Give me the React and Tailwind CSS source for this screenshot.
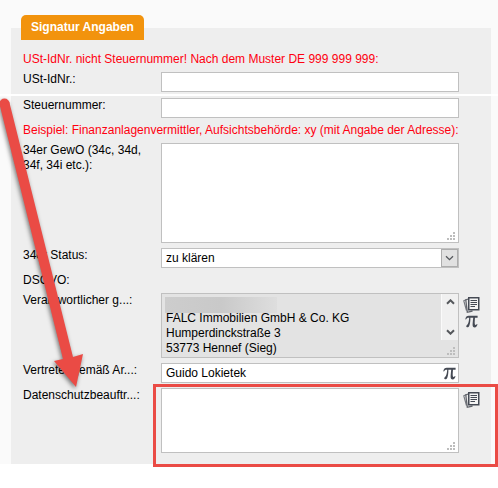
import { useState } from 'react';

const PapersIcon = () => (
  <svg width="17" height="17" viewBox="0 0 17 17" fill="none">
    <path d="M3.5 2.5 L0.8 3.8 L3.5 13.5" stroke="#777a80" strokeWidth="1.2" />
    <path
      d="M5 2 L2.8 3 L4.3 15.3 L9.5 14"
      stroke="#62656c"
      strokeWidth="1.3"
    />
    <rect
      x="5.75"
      y="0.75"
      width="10"
      height="12"
      fill="#f4f4f4"
      stroke="#454a54"
      strokeWidth="1.5"
    />
    <path
      d="M7.5 3.5h6.5M7.5 5.5h6.5M7.5 7.5h6.5M7.5 9.5h4.5"
      stroke="#454a54"
      strokeWidth="1"
    />
  </svg>
);

const PiIcon = () => (
  <svg width="13" height="13" viewBox="0 0 13 13" fill="#454a54">
    <path d="M0.3 4.3 C0.7 1.9 1.8 0.8 3.8 0.8 H12.6 V2.8 H10 C9.8 5.2 9.6 7.6 9.8 9 C10 10.4 11.3 10.4 11.8 9 L12.5 9.3 C12.1 11.4 11.1 12.4 9.8 12.4 C8.2 12.4 7.5 11.3 7.6 9.2 C7.7 7 8 5 8.2 2.8 H5.4 C5.4 6 5.1 8.8 4.3 10.8 C3.8 12 3 12.4 2.2 12.3 C1.1 12.2 0.9 10.9 1.8 10.3 C3.4 9 4 6 4.2 2.8 C2.4 2.7 1.6 3.1 1 4.5 Z" />
  </svg>
);

const Chevron = ({ up, bold }) => (
  <svg width="9" height="6" viewBox="0 0 9 6" fill="none">
    <path
      d={up ? 'M1 4.8 L4.5 1.3 L8 4.8' : 'M1 1.2 L4.5 4.7 L8 1.2'}
      stroke="#55585c"
      strokeWidth={bold ? 2 : 1.3}
    />
  </svg>
);

// dotted corner of the text areas
const Grip = () => (
  <svg
    className="pointer-events-none absolute right-1 bottom-[3px]"
    width="8"
    height="8"
    viewBox="0 0 8 8"
    fill="#bdbdbd"
  >
    <path d="M6 0h2v2h-2zM3 3h2v2h-2zM6 3h2v2h-2zM0 6h2v2h-2zM3 6h2v2h-2zM6 6h2v2h-2z" />
  </svg>
);

const Row = ({ id, label, children, tools }) => (
  <div className="relative flex items-start">
    <label htmlFor={id} className="w-[138px] shrink-0 pr-3">
      {label}
    </label>
    <div className="relative min-w-0 flex-1">{children}</div>
    <div className="flex w-8 shrink-0 flex-col items-start gap-px pt-1 pl-1">
      {tools}
    </div>
  </div>
);

const Hint = ({ children }) => (
  <p className="whitespace-nowrap text-[#ff0010]">{children}</p>
);

const field =
  'block w-full rounded-none border border-[#c0c0c0] bg-white px-1 outline-none';

const App = () => {
  const [status, setStatus] = useState('zu klären');

  return (
    <main className="relative bg-white pb-6 font-['Liberation_Sans',Arial,sans-serif] text-xs leading-[15px] text-black">
      <form className="bg-[#fafafa] pt-[15px]">
        <fieldset className="mr-[7px] ml-[11px] min-w-0 bg-[#eeeeee] pb-[11px]">
          <legend className="ml-[10px] rounded-t-[5px] bg-[#f2930d] px-[10px] py-[5px] font-bold text-white">
            Signatur Angaben
          </legend>

          <div className="flex flex-col gap-[5px] pt-3 pl-3">
            <Hint>
              USt-IdNr. nicht Steuernummer! Nach dem Muster DE 999 999 999:
            </Hint>
            <Row id="ust" label="USt-IdNr.:">
              <input id="ust" type="text" className={`${field} h-5`} />
            </Row>

            <div className="-my-[3px] mr-[-7px] ml-[-23px] h-[2px] bg-white" />

            <Row id="steuer" label="Steuernummer:">
              <input id="steuer" type="text" className={`${field} h-5`} />
            </Row>
            <Hint>
              Beispiel: Finanzanlagenvermittler, Aufsichtsbehörde: xy (mit
              Angabe der Adresse):
            </Hint>
            <Row id="gewo" label="34er GewO (34c, 34d, 34f, 34i etc.):">
              <textarea
                id="gewo"
                className={`${field} h-[100px] resize-none py-[2px]`}
              />
              <Grip />
            </Row>
            <Row id="status" label="34er Status:">
              <select
                id="status"
                value={status}
                onChange={(e) => setStatus(e.target.value)}
                className={`${field} h-5 appearance-none`}
              >
                <option>zu klären</option>
                <option>vorhanden</option>
              </select>
              <span className="pointer-events-none absolute top-px right-px flex h-[18px] w-[17px] items-center justify-center border border-[#adadad] bg-[#e1e1e1]">
                <Chevron />
              </span>
            </Row>
            <p>DSGVO:</p>
            <Row
              id="verantwortlich"
              label="Verantwortlicher g...:"
              tools={
                <>
                  <button type="button" aria-label="Vorlagen">
                    <PapersIcon />
                  </button>
                  <button
                    type="button"
                    aria-label="Platzhalter"
                    className="pl-[2px]"
                  >
                    <PiIcon />
                  </button>
                </>
              }
            >
              <textarea
                id="verantwortlich"
                readOnly
                value={
                  '\nFALC Immobilien GmbH & Co. KG\nHumperdinckstraße 3\n53773 Hennef (Sieg)'
                }
                className="block h-[65px] w-full resize-none overflow-hidden rounded-none border border-[#c0c0c0] bg-[#e3e3e3] px-1 py-[2px] outline-none"
              />
              {/* hidden name */}
              <div className="absolute top-1 left-1 h-4 w-28 bg-linear-to-r from-[#cdcdcd] via-[#c9c9c9] to-[#dedede]" />
              <div className="absolute top-px right-px flex h-[46px] w-[17px] flex-col items-center justify-between border-l border-[#fafafa] bg-[#f0f0f0] py-[5px]">
                <Chevron up bold />
                <Chevron bold />
              </div>
              <Grip />
            </Row>
            <Row id="vertreter" label="Vertreter gemäß Ar...:">
              <input
                id="vertreter"
                type="text"
                defaultValue="Guido Lokietek"
                className={`${field} h-5`}
              />
              <button
                type="button"
                aria-label="Platzhalter"
                className="absolute top-1 right-[3px]"
              >
                <PiIcon />
              </button>
            </Row>
            <div className="relative">
              <Row
                id="datenschutz"
                label="Datenschutzbeauftr...:"
                tools={
                  <button type="button" aria-label="Vorlagen">
                    <PapersIcon />
                  </button>
                }
              >
                <textarea
                  id="datenschutz"
                  className={`${field} h-[65px] resize-none py-[2px]`}
                />
                <Grip />
              </Row>
              <div className="pointer-events-none absolute top-[-4px] right-[-7px] bottom-[-14px] left-[130px] border-3 border-[#ea4b45]" />
            </div>
          </div>
        </fieldset>
      </form>

      {/* arrow to the last field */}
      <svg
        className="pointer-events-none absolute top-0 left-0 drop-shadow-[-1px_2px_2px_rgba(0,0,0,0.5)]"
        width="100"
        height="400"
        viewBox="0 0 100 400"
        fill="#ea4b45"
      >
        <circle cx="4.5" cy="103.5" r="5" />
        <path d="M-0.3 105 L9.3 102 L73 357 L83 354 L76 387 L54 361 L63 359 Z" />
      </svg>
    </main>
  );
};

export default App;
